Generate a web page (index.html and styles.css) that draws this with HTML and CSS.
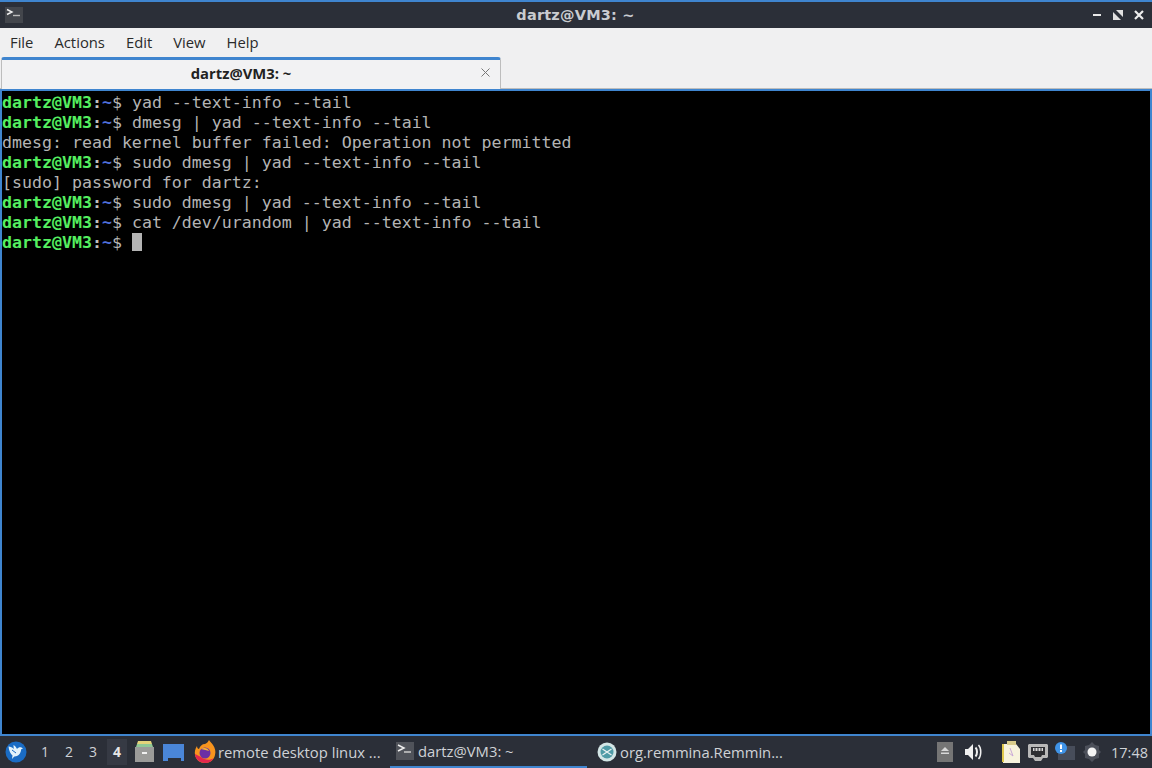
FILE: index.html
```html
<!DOCTYPE html>
<html lang="en">
<head>
<meta charset="utf-8">
<title>dartz@VM3: ~</title>
<link rel="stylesheet" href="styles.css">
</head>
<body>
<div class="window">
  <header class="titlebar">
    <span class="app-icon"><svg width="18" height="16" viewBox="0 0 18 16"><path d="M2 2.500 7 5 2 7.500" fill="none" stroke="#eee" stroke-width="1.400"/><path d="M8 8.500h7" stroke="#bbb" stroke-width="1.400"/></svg></span>
    <div class="title">dartz@VM3: ~</div>
    <div class="win-buttons">
      <svg width="10" height="10" viewBox="0 0 10 10"><path d="M1 5h8" stroke="#e8e8e8" stroke-width="2"/></svg>
      <svg width="10" height="10" viewBox="0 0 10 10"><path d="M0 2v8h8zM10 0H3l7 7z" fill="#e0e0e0"/></svg>
      <svg width="10" height="10" viewBox="0 0 10 10"><path d="M1 1l8 8M9 1l-8 8" stroke="#eee" stroke-width="2.200"/></svg>
    </div>
  </header>
  <nav class="menubar">
    <span>File</span><span>Actions</span><span>Edit</span><span>View</span><span>Help</span>
  </nav>
  <div class="tabbar">
    <div class="tab">
      <span class="tab-label">dartz@VM3: ~</span>
      <svg class="tab-close" width="9" height="9" viewBox="0 0 9 9"><path d="M.5.500l8 8M8.500.500l-8 8" stroke="#777" stroke-width="1"/></svg>
    </div>
  </div>
  <main class="terminal">
<div class="line"><b class="u">dartz@VM3</b><b class="c">:</b><b class="p">~</b>$ yad --text-info --tail</div>
<div class="line"><b class="u">dartz@VM3</b><b class="c">:</b><b class="p">~</b>$ dmesg | yad --text-info --tail</div>
<div class="line">dmesg: read kernel buffer failed: Operation not permitted</div>
<div class="line"><b class="u">dartz@VM3</b><b class="c">:</b><b class="p">~</b>$ sudo dmesg | yad --text-info --tail</div>
<div class="line">[sudo] password for dartz:</div>
<div class="line"><b class="u">dartz@VM3</b><b class="c">:</b><b class="p">~</b>$ sudo dmesg | yad --text-info --tail</div>
<div class="line"><b class="u">dartz@VM3</b><b class="c">:</b><b class="p">~</b>$ cat /dev/urandom | yad --text-info --tail</div>
<div class="line"><b class="u">dartz@VM3</b><b class="c">:</b><b class="p">~</b>$ <span class="cursor"></span></div>
  </main>
</div>
<footer class="panel">
  <span class="start"><svg width="22" height="22" viewBox="0 0 22 22"><circle cx="11" cy="11" r="10.500" fill="#1a6cc4"/><path d="M3.500 5.500c2 0 4 1 5.500 2.500-.5-1.500-.5-3-.5-4 1.500 1 3 2.500 3.500 4 1-1.500 3-2 4.500-1.500l1.500 1-1.800.8c-.3 3.200-1.700 5.700-4.200 6.700-1 .4-2 .5-2.700.4L7 18l.5-3.500C5.500 13 4 9.500 3.500 5.500z" fill="#e4f3fb"/><path d="M7 9l4 3" stroke="#1a6cc4" stroke-width="1"/></svg></span>
  <div class="pager"><span>1</span><span>2</span><span>3</span><span class="on">4</span></div>
  <span class="launcher l-file"><svg width="21" height="22" viewBox="0 0 21 22"><path d="M4 0h13l1 3H3z" fill="#e3d37a"/><path d="M3 3h15l1 3H2z" fill="#8fc896"/><path d="M1 6h19v15H1z" fill="#9b9b99"/><path d="M8 11h5v2H8z" fill="#f0f0f0"/></svg></span>
  <span class="launcher l-folder"><svg width="21" height="17" viewBox="0 0 21 17"><path d="M0 0h21v17h-3v-3H5v3H0z" fill="#4a86d8"/></svg></span>
  <div class="task task-ff">
    <svg width="22" height="24" viewBox="0 0 22 24"><path d="M11 4c2-1 3-2 4-4 1 2 3 3 4 5 2 3 3 6 2 10-1 5-5 8-10 8S2 20 1 15C.5 12 1 9 3 6c0 2 1 3 2 3 1-3 3-5 6-5z" fill="#f7941e"/><path d="M1 14c0 5 5 9 10 9 4 0 7-2 9-5-4 3-10 2-13-1-2-1-4-2-6-3z" fill="#e3264e"/><circle cx="11" cy="13" r="5.500" fill="#6a2fa5"/><path d="M7 9c3-2 7-1 8 2-2-1-5-1-8-2z" fill="#f7b733"/></svg>
    <span>remote desktop linux ...</span>
  </div>
  <div class="task task-term">
    <span class="task-icon"><svg width="18" height="18" viewBox="0 0 18 18"><path d="M2 3l6 3-6 3" fill="none" stroke="#eee" stroke-width="1.500"/><path d="M8 10h7" stroke="#ccc" stroke-width="1.500"/></svg></span>
    <span>dartz@VM3: ~</span>
  </div>
  <div class="task task-rem">
    <svg width="20" height="20" viewBox="0 0 20 20"><circle cx="10" cy="10" r="9.500" fill="#d3e6e6"/><circle cx="10" cy="10" r="6.500" fill="#4f9ba6"/><path d="M5.500 7l9 6M14.500 7l-9 6" stroke="#e8f0f0" stroke-width="1.300"/></svg>
    <span>org.remmina.Remmin...</span>
  </div>
  <div class="tray">
    <svg class="t-eject" width="16" height="20" viewBox="0 0 16 20"><path d="M0 0h16v20H0z" fill="#757575"/><path d="M8 5l4 4H4zM4 10.500h8v1.500H4z" fill="#d8d8d8"/></svg>
    <svg class="t-vol" width="17" height="16" viewBox="0 0 17 16"><path d="M0 5h3l5-5v16l-5-5H0z" fill="#f0f0f0"/><path d="M10.500 3.500c2 2 2 7 0 9" fill="none" stroke="#f0f0f0" stroke-width="2"/><path d="M13.500 1c3 3 3 11 0 14" fill="none" stroke="#f0f0f0" stroke-width="1.500"/></svg>
    <svg class="t-note" width="20" height="24" viewBox="0 0 20 24"><path d="M2 4h13l4 5v14H2z" fill="#f7f3dd"/><path d="M1 4h2v18H1z" fill="#e0c94c"/><path d="M6 1h9v4H6z" fill="#d9cc8c"/><path d="M9 8l3 8-4-3" fill="none" stroke="#c9a8d8"/></svg>
    <svg class="t-net" width="20" height="17" viewBox="0 0 20 17"><path d="M1 0h18l1 1v12l-1 1h-4l-2 3H7l-2-3H1l-1-1V1z" fill="#b8b8b8"/><path d="M3 3h14v8h-3l-1 2H7l-1-2H3z" fill="#2e2f33"/><path d="M5 4h10v3H5z" fill="#d8d8d8"/><path d="M7 4v3M10 4v3M13 4v3" stroke="#2e2f33"/></svg>
    <svg class="t-upd" width="20" height="20" viewBox="0 0 20 20"><path d="M3 4h17v14H3z" fill="#474d5a"/><circle cx="6" cy="6" r="6" fill="#3f94e8"/><path d="M5 2.500h2v4.500H5zM5 8h2v2H5z" fill="#fff"/></svg>
    <svg class="t-gear" width="18" height="20" viewBox="0 0 18 20"><path d="M9 0l3 3 4 1 0 4 2 2-2 2 0 4-4 1-3 3-3-3-4-1 0-4-2-2 2-2 0-4 4-1z" fill="#4c505a"/><circle cx="9" cy="10" r="4.500" fill="#f4f4f4"/></svg>
    <span class="clock">17:48</span>
  </div>
</footer>
</body>
</html>
```
FILE: styles.css
```css
* { box-sizing: border-box; }
html, body { margin: 0; height: 100%; }
body {
  width: 1152px;
  height: 768px;
  overflow: hidden;
  display: flex;
  flex-direction: column;
  font-family: "Open Sans", sans-serif;
  background: #000;
}
.window {
  flex: 1;
  min-height: 0;
  display: flex;
  flex-direction: column;
  background: #3f85cf;
  padding: 2px 2px 2px 2px;
}
.titlebar {
  height: 26px;
  margin: 0 -2px;
  background: #2b2f38;
  display: flex;
  align-items: center;
  flex: none;
  padding-left: 5px;
}
.app-icon {
  width: 18px;
  height: 16px;
  background: #43464c;
  display: flex;
}
.title {
  flex: 1;
  text-align: center;
  font: bold 14.5px "DejaVu Sans", sans-serif;
  color: #c9ccd0;
  letter-spacing: 0.2px;
  padding-left: 36px;
}
.win-buttons {
  display: flex;
  gap: 11px;
  align-items: center;
  padding-right: 8px;
}
.menubar {
  height: 29px;
  margin: 0 -2px;
  background: #f0f0f1;
  display: flex;
  align-items: center;
  flex: none;
  gap: 21px;
  padding: 0 0 2px 10px;
  font-size: 14.8px;
  color: #2a2a2a;
}
.tabbar {
  height: 32px;
  margin: 0 -2px;
  background: #f0f0f1;
  flex: none;
  display: flex;
  align-items: flex-end;
  padding-left: 1px;
  border-bottom: 1px solid #bdbdbd;
}
.tab {
  width: 500px;
  height: 32px;
  background: #f2f2f3;
  border-top: 3px solid #3f85cf;
  border-left: 1px solid #bdbdbd;
  border-right: 1px solid #bdbdbd;
  border-radius: 3px 3px 0 0;
  display: flex;
  align-items: center;
  justify-content: center;
  position: relative;
  margin-bottom: -1px;
}
.tab-label {
  font-size: 14.8px;
  font-weight: 700;
  color: #222;
  margin-right: 20px;
  margin-bottom: 3px;
}
.tab-close {
  position: absolute;
  right: 10px;
  top: 8px;
}
.terminal {
  flex: 1;
  min-height: 0;
  background: #000;
  margin-top: 2px;
  padding-top: 2px;
  font: 16.6px/20px "DejaVu Sans Mono", monospace;
  color: #b4b4b4;
  overflow: hidden;
}
.line { height: 20px; white-space: pre; }
.u { color: #55f060; font-weight: 700; }
.c { color: #c0c0c0; font-weight: 700; }
.p { color: #4f6fdc; font-weight: 700; }
.cursor {
  display: inline-block;
  width: 10px;
  height: 18px;
  background: #b4b4b4;
  vertical-align: -3px;
}
.panel {
  height: 32px;
  flex: none;
  background: #2b2f38;
  display: flex;
  align-items: center;
  color: #cfd2d6;
  font-size: 14.8px;
}
.start { margin-left: 5px; display: flex; }
.pager { display: flex; gap: 4px; margin-left: 8px; }
.pager span {
  width: 20px;
  height: 26px;
  line-height: 26px;
  text-align: center;
  font-size: 14px;
}
.pager .on { background: #363a44; font-weight: 700; color: #e6e6e6; }
.launcher { display: flex; }
.l-file { margin-left: 7px; }
.l-folder { margin-left: 8px; }
.task {
  display: flex;
  align-items: center;
  height: 32px;
  white-space: nowrap;
}
.task-ff { margin-left: 10px; width: 196px; gap: 2px; }
.task-term { width: 197px; padding-left: 6px; gap: 4px; border-bottom: 2px solid #3f85cf; }
.task-icon { width: 18px; height: 18px; background: #50535a; display: flex; }
.task-rem { margin-left: 10px; gap: 3px; }
.tray {
  margin-left: auto;
  display: flex;
  align-items: center;
  padding-right: 4px;
}
.t-vol { margin-left: 12px; }
.t-note { margin-left: 19px; }
.t-net { margin-left: 7px; }
.t-upd { margin-left: 7px; }
.t-gear { margin-left: 8px; }
.clock { font-size: 14.5px; margin-left: 10px; }
```
